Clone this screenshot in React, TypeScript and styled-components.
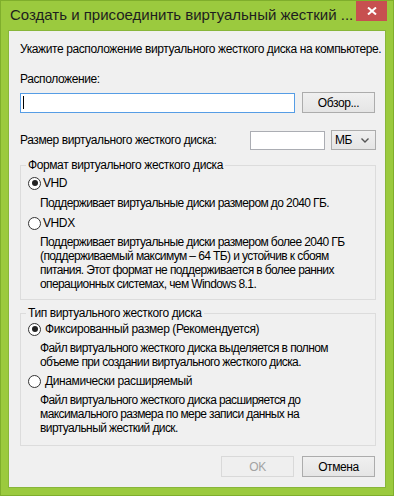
import React from "react";
import styled, { createGlobalStyle } from "styled-components";

const Global = createGlobalStyle`
  html, body { margin: 0; padding: 0; background: #ffffff; }
  body { font-family: "Liberation Sans", Arial, sans-serif; -webkit-font-smoothing: antialiased; }
  * { box-sizing: border-box; }
`;

const Window = styled.div`
  width: 394px;
  height: 496px;
  background: #9bca3e;
  border: 1px solid #7fae2c;
  display: flex;
  flex-direction: column;
`;

const TitleBar = styled.div`
  height: 29px;
  flex: 0 0 29px;
  display: flex;
  align-items: flex-start;
  justify-content: space-between;
  padding: 0 6px 0 9px;
`;

const Title = styled.div`
  font-size: 15px;
  line-height: 28px;
  color: #1e1e1e;
  white-space: nowrap;
`;

const CloseButton = styled.div`
  width: 31px;
  height: 20px;
  background: #c75050;
  display: flex;
  align-items: center;
  justify-content: center;
`;

const Client = styled.div`
  flex: 1;
  margin: 0 7px 7px 7px;
  border: 1px solid #88b63a;
  background: #f0f0f0;
  padding: 10px 9px 0 11px;
  display: flex;
  flex-direction: column;
  font-size: 12px;
  letter-spacing: -0.4px;
  color: #000;
`;

const Text = styled.div<{ $mt?: number; $lh?: number }>`
  margin-top: ${(p) => p.$mt ?? 0}px;
  line-height: ${(p) => p.$lh ?? 16}px;
  white-space: nowrap;
`;

const Desc = styled.div<{ $mt: number }>`
  margin-top: ${(p) => p.$mt}px;
  margin-left: 12px;
  line-height: 14px;
  letter-spacing: -0.6px;
  white-space: nowrap;
`;

const Row = styled.div<{ $mt: number; $h: number }>`
  margin-top: ${(p) => p.$mt}px;
  height: ${(p) => p.$h}px;
  display: flex;
  align-items: center;
`;

const TextBox = styled.div<{ $w: number; $h: number; $focused?: boolean }>`
  width: ${(p) => p.$w}px;
  height: ${(p) => p.$h}px;
  flex: 0 0 ${(p) => p.$w}px;
  background: #ffffff;
  border: 1px solid ${(p) => (p.$focused ? "#569de5" : "#abadb3")};
  display: flex;
  align-items: center;
  padding-left: 2px;
`;

const Caret = styled.span`
  width: 1px;
  height: 13px;
  background: #000;
`;

const Button = styled.div<{ $disabled?: boolean; $w?: number }>`
  width: ${(p) => p.$w ?? 73}px;
  height: 21px;
  flex: 0 0 ${(p) => p.$w ?? 73}px;
  border: 1px solid ${(p) => (p.$disabled ? "#d9d9d9" : "#acacac")};
  background: ${(p) => (p.$disabled ? "#efefef" : "linear-gradient(#f0f0f0, #e5e5e5)")};
  color: ${(p) => (p.$disabled ? "#a3a3a3" : "#000")};
  display: flex;
  align-items: center;
  justify-content: center;
  font-size: 12px;
`;

const Spacer = styled.div<{ $w: number }>`
  flex: 0 0 ${(p) => p.$w}px;
`;

const SizeLabel = styled.div`
  flex: 1;
  line-height: 16px;
  white-space: nowrap;
`;

const Combo = styled.div`
  width: 45px;
  height: 20px;
  flex: 0 0 45px;
  border: 1px solid #acacac;
  background: linear-gradient(#f0f0f0, #e5e5e5);
  display: flex;
  align-items: center;
  justify-content: space-between;
  padding: 0 6px 0 3px;
`;

const Group = styled.fieldset<{ $mt: number; $pt: number; $pb: number }>`
  margin: ${(p) => p.$mt}px 0 0 0;
  padding: ${(p) => p.$pt}px 0 ${(p) => p.$pb}px 7px;
  border: 1px solid #dcdcdc;
  min-width: 0;
  display: flex;
  flex-direction: column;
`;

const Legend = styled.legend`
  padding: 0 2px;
  margin-left: -2px;
  font-size: 12px;
  line-height: 14px;
  white-space: nowrap;
`;

const RadioRow = styled.div<{ $mt?: number; $gap?: number }>`
  margin-top: ${(p) => p.$mt ?? 0}px;
  height: 16px;
  display: flex;
  align-items: center;
  gap: ${(p) => p.$gap ?? 2}px;
  white-space: nowrap;
`;

const RadioCircle = styled.span<{ $checked?: boolean }>`
  width: 13px;
  height: 13px;
  border-radius: 50%;
  border: 1px solid #333;
  background: #fff;
  display: flex;
  align-items: center;
  justify-content: center;
  &::after {
    content: "";
    width: 6px;
    height: 6px;
    border-radius: 50%;
    background: ${(p) => (p.$checked ? "#222" : "transparent")};
  }
`;

const Footer = styled.div`
  margin-top: 10px;
  display: flex;
  justify-content: flex-end;
  gap: 8px;
  padding-right: 1px;
`;

const Radio = ({ checked, label, mt, gap }: { checked?: boolean; label: string; mt?: number; gap?: number }) => (
  <RadioRow $mt={mt} $gap={gap}>
    <RadioCircle $checked={checked} />
    <span>{label}</span>
  </RadioRow>
);

export default function App() {
  return (
    <>
      <Global />
      <Window>
        <TitleBar>
          <Title>Создать и присоединить виртуальный жесткий ...</Title>
          <CloseButton>
            <svg width="10" height="8" viewBox="0 0 10 8">
              <path d="M1 0.5 L9 7.5 M9 0.5 L1 7.5" stroke="#fff" strokeWidth="2" fill="none" />
            </svg>
          </CloseButton>
        </TitleBar>
        <Client>
          <Text>Укажите расположение виртуального жесткого диска на компьютере.</Text>
          <Text $mt={14}>Расположение:</Text>
          <Row $mt={5} $h={21}>
            <TextBox $w={275} $h={20} $focused>
              <Caret />
            </TextBox>
            <Spacer $w={7} />
            <Button>Обзор...</Button>
          </Row>
          <Row $mt={17} $h={20}>
            <SizeLabel>Размер виртуального жесткого диска:</SizeLabel>
            <TextBox $w={75} $h={19} />
            <Spacer $w={6} />
            <Combo>
              <span>МБ</span>
              <svg width="8" height="5" viewBox="0 0 8 5">
                <polyline points="0.5,0.5 4,4 7.5,0.5" stroke="#555" strokeWidth="1.4" fill="none" />
              </svg>
            </Combo>
          </Row>
          <Group $mt={8} $pt={3} $pb={8}>
            <Legend>Формат виртуального жесткого диска</Legend>
            <Radio checked label="VHD" />
            <Desc $mt={5}>Поддерживает виртуальные диски размером до 2040 ГБ.</Desc>
            <Radio label="VHDX" mt={5} />
            <Desc $mt={4}>
              Поддерживает виртуальные диски размером более 2040 ГБ
              <br />
              (поддерживаемый максимум – 64 ТБ) и устойчив к сбоям
              <br />
              питания. Этот формат не поддерживается в более ранних
              <br />
              операционных системах, чем Windows 8.1.
            </Desc>
          </Group>
          <Group $mt={6} $pt={1} $pb={10}>
            <Legend>Тип виртуального жесткого диска</Legend>
            <Radio checked label="Фиксированный размер (Рекомендуется)" gap={4} />
            <Desc $mt={4}>
              Файл виртуального жесткого диска выделяется в полном
              <br />
              объеме при создании виртуального жесткого диска.
            </Desc>
            <Radio label="Динамически расширяемый" mt={4} gap={4} />
            <Desc $mt={4}>
              Файл виртуального жесткого диска расширяется до
              <br />
              максимального размера по мере записи данных на
              <br />
              виртуальный жесткий диск.
            </Desc>
          </Group>
          <Footer>
            <Button $disabled>OK</Button>
            <Button>Отмена</Button>
          </Footer>
        </Client>
      </Window>
    </>
  );
}
